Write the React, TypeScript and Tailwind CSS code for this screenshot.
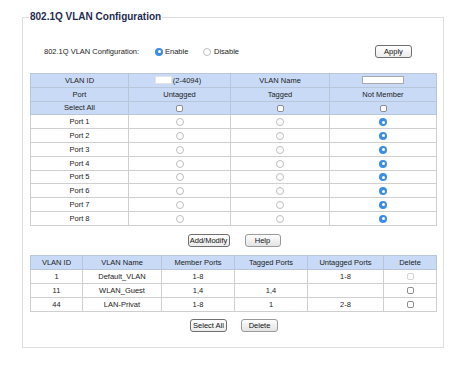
import React from 'react';

const ports = ['Port 1', 'Port 2', 'Port 3', 'Port 4', 'Port 5', 'Port 6', 'Port 7', 'Port 8'];

const vlans = [
  { id: '1', name: 'Default_VLAN', member: '1-8', tagged: '', untagged: '1-8' },
  { id: '11', name: 'WLAN_Guest', member: '1,4', tagged: '1,4', untagged: '' },
  { id: '44', name: 'LAN-Privat', member: '1-8', tagged: '1', untagged: '2-8' },
];

function Radio({ checked }: { checked?: boolean }) {
  if (checked) {
    return (
      <span className="inline-flex w-[8px] h-[8px] rounded-full bg-[#3b8de6] items-center justify-center align-middle">
        <span className="w-[3px] h-[3px] rounded-full bg-white" />
      </span>
    );
  }
  return <span className="inline-block w-[8px] h-[8px] rounded-full border border-[#bdbdbd] bg-white align-middle" />;
}

function Check({ light }: { light?: boolean }) {
  return (
    <span
      className={
        'inline-block w-[7px] h-[7px] rounded-[2px] border bg-white align-middle ' +
        (light ? 'border-[#d4d4d4]' : 'border-[#8e8e8e]')
      }
    />
  );
}

function Btn({ children, w, soft }: { children: React.ReactNode; w: string; soft?: boolean }) {
  return (
    <button
      className={
        'h-[13px] rounded-[3px] border text-[7.5px] leading-none text-[#111] bg-gradient-to-b ' +
        (soft
          ? 'border-[#9a9a9a] from-[#fdfdfd] to-[#e4e4e4] '
          : 'border-[#6f6f6f] from-[#ffffff] to-[#ececec] ') +
        w
      }
    >
      {children}
    </button>
  );
}

const hd = 'bg-[#c8daf6] border border-[#b9c6da] text-center p-0';
const td = 'border border-[#cfcfcf] text-center p-0';

export default function App() {
  return (
    <div className="w-[474px] h-[384px] bg-white font-['Liberation_Sans',Arial,sans-serif] text-[7.5px] text-[#222] pt-[11px]">
      <fieldset className="ml-[22px] w-[422px] border border-[#dedede] pb-[15px]">
        <legend className="ml-[6px] px-[1px] text-[10px] leading-[12px] font-bold text-[#1f2d52]">
          802.1Q VLAN Configuration
        </legend>

        {/* global switch */}
        <div className="mt-[22px] h-[13px] flex items-center pl-[21px] pr-[31px]">
          <span className="w-[111px]">802.1Q VLAN Configuration:</span>
          <Radio checked />
          <span className="ml-[2px] w-[38px]">Enable</span>
          <Radio />
          <span className="ml-[3px]">Disable</span>
          <div className="ml-auto">
            <Btn w="w-[37px]">Apply</Btn>
          </div>
        </div>

        {/* port membership */}
        <table className="mt-[15px] ml-[7px] w-[406px] border-collapse table-fixed">
          <colgroup>
            <col className="w-[98px]" />
            <col className="w-[102px]" />
            <col className="w-[99px]" />
            <col className="w-[107px]" />
          </colgroup>
          <tbody>
            <tr className="h-[13.8px]">
              <td className={hd}>VLAN ID</td>
              <td className={hd}>
                <div className="flex items-center justify-center">
                  <span className="w-[17px] h-[8px] bg-white border border-[#e3e3e3]" />
                  <span className="ml-[1px] mr-[3px]">(2-4094)</span>
                </div>
              </td>
              <td className={hd}>VLAN Name</td>
              <td className={hd}>
                <div className="flex justify-center">
                  <span className="w-[42px] h-[8px] bg-white border border-[#a9a9a9]" />
                </div>
              </td>
            </tr>
            <tr className="h-[13.8px]">
              <td className={hd}>Port</td>
              <td className={hd}>Untagged</td>
              <td className={hd}>Tagged</td>
              <td className={hd}>Not Member</td>
            </tr>
            <tr className="h-[13.8px]">
              <td className={hd}>Select All</td>
              <td className={hd}><Check /></td>
              <td className={hd}><Check /></td>
              <td className={hd}><Check /></td>
            </tr>
            {ports.map((p) => (
              <tr key={p} className="h-[13.8px]">
                <td className={td}>{p}</td>
                <td className={td}><Radio /></td>
                <td className={td}><Radio /></td>
                <td className={td}><Radio checked /></td>
              </tr>
            ))}
          </tbody>
        </table>

        <div className="mt-[8px] flex justify-center gap-[15px] pl-[2px]">
          <Btn w="w-[42px]">Add/Modify</Btn>
          <Btn w="w-[36px]" soft>Help</Btn>
        </div>

        {/* vlan list */}
        <table className="mt-[8px] ml-[7px] w-[406px] border-collapse table-fixed">
          <colgroup>
            <col className="w-[52px]" />
            <col className="w-[79px]" />
            <col className="w-[73px]" />
            <col className="w-[73px]" />
            <col className="w-[76px]" />
            <col className="w-[53px]" />
          </colgroup>
          <thead>
            <tr className="h-[14px]">
              <th className={hd + ' font-normal'}>VLAN ID</th>
              <th className={hd + ' font-normal'}>VLAN Name</th>
              <th className={hd + ' font-normal'}>Member Ports</th>
              <th className={hd + ' font-normal'}>Tagged Ports</th>
              <th className={hd + ' font-normal'}>Untagged Ports</th>
              <th className={hd + ' font-normal'}>Delete</th>
            </tr>
          </thead>
          <tbody>
            {vlans.map((v, i) => (
              <tr key={v.id} className="h-[14px]">
                <td className={td}>{v.id}</td>
                <td className={td}>{v.name}</td>
                <td className={td}>{v.member}</td>
                <td className={td}>{v.tagged}</td>
                <td className={td}>{v.untagged}</td>
                <td className={td}><Check light={i === 0} /></td>
              </tr>
            ))}
          </tbody>
        </table>

        <div className="mt-[7px] flex justify-center gap-[14px] pl-[2px]">
          <Btn w="w-[37px]">Select All</Btn>
          <Btn w="w-[37px]" soft>Delete</Btn>
        </div>
      </fieldset>
    </div>
  );
}
